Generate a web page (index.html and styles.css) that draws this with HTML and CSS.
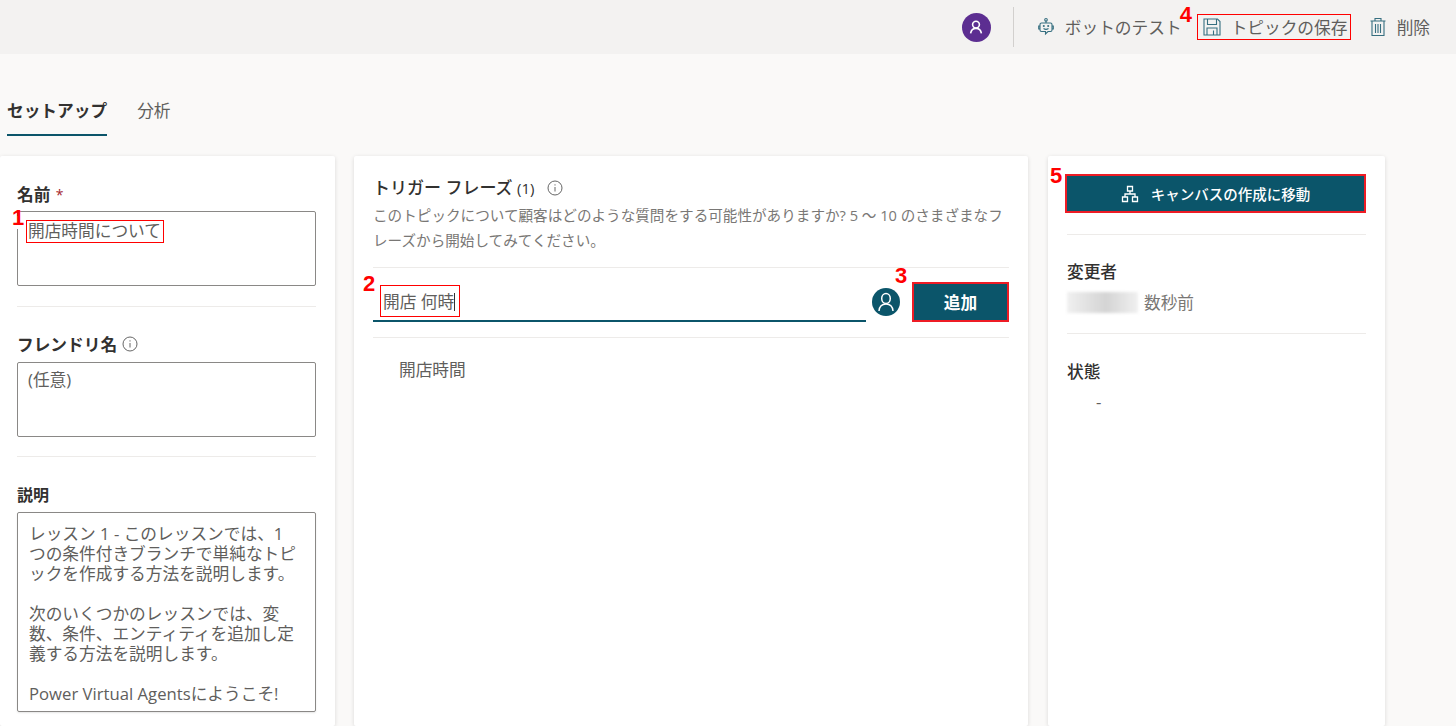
FILE: index.html
```html
<!DOCTYPE html>
<html lang="ja">
<head>
<meta charset="utf-8">
<title>トピック</title>
<link rel="stylesheet" href="styles.css">
</head>
<body>
<header class="topbar">
  <div class="avatar"><svg width="16" height="16" viewBox="0 0 16 16" fill="none" stroke="#fff" stroke-width="1.6"><circle cx="8" cy="5.6" r="3.4"/><path d="M2.6 14.4c.5-3.2 2.400-5 5.400-5s4.900 1.800 5.400 5"/></svg></div>
  <div class="vsep"></div>
  <button class="cmd cmd-test"><svg class="ico" width="20" height="20" viewBox="0 0 20 20" fill="none" stroke="#366f80" stroke-width="1.100"><circle cx="10" cy="2.800" r="1.300"/><path d="M10 4.100V6M5.500 6h9a1.500 1.500 0 0 1 1.500 1.500V13a1.500 1.500 0 0 1-1.500 1.500h-2.500L9.500 17v-2.500h-4A1.500 1.500 0 0 1 4 13V7.500A1.500 1.500 0 0 1 5.500 6zM4 9H2.700v3H4M16 9h1.300v3H16M7.500 11.500c1.500 1 3.500 1 5 0"/><circle cx="7.800" cy="9" r=".5"/><circle cx="12.200" cy="9" r=".5"/></svg>ボットのテスト</button>
  <button class="cmd cmd-save"><svg class="ico" width="18" height="18" viewBox="0 0 18 18" fill="none" stroke="#366f80" stroke-width="1.100"><path d="M1 1h13.500L17 3.500V17H1zM4.500 1v5.500h9V1M4 17v-7h10v7M10.500 12.500V17"/></svg><span>トピックの保存</span><b class="num num-4">4</b></button>
  <button class="cmd cmd-del"><svg class="ico" width="18" height="20" viewBox="0 0 18 20" fill="none" stroke="#366f80" stroke-width="1.100"><path d="M1.500 4h15M6 4V1.500h6V4M3 4v14.500h12V4M6.500 7v9M9 7v9M11.500 7v9"/></svg>削除</button>
</header>

<nav class="tabs">
  <a class="tab tab-on">セットアップ</a>
  <a class="tab">分析</a>
</nav>

<main class="cols">
  <section class="card card-left">
    <div class="field">
      <label class="lbl">名前 <em class="req">*</em></label>
      <div class="box box-name"><span class="mark mark-name">開店時間について</span><b class="num num-1">1</b></div>
    </div>
    <hr class="rule">
    <div class="field field-friendly">
      <label class="lbl">フレンドリ名<svg class="info" width="16" height="16" viewBox="0 0 16 16" fill="none" stroke="#555" stroke-width=".9"><circle cx="8" cy="8" r="7"/><path d="M8 7v4.500M8 4.300v1.200"/></svg></label>
      <div class="box box-friendly">(任意)</div>
    </div>
    <hr class="rule">
    <div class="field field-desc">
      <label class="lbl lbl-desc">説明</label>
      <div class="box box-desc">レッスン 1 - このレッスンでは、1<br>つの条件付きブランチで単純なトピ<br>ックを作成する方法を説明します。<br><br>次のいくつかのレッスンでは、変<br>数、条件、エンティティを追加し定<br>義する方法を説明します。<br><br>Power Virtual Agentsにようこそ!</div>
    </div>
  </section>

  <section class="card card-mid">
    <h2 class="mid-title">トリガー フレーズ <span class="count">(1)</span><svg class="info info-mid" width="16" height="16" viewBox="0 0 16 16" fill="none" stroke="#555" stroke-width=".9"><circle cx="8" cy="8" r="7"/><path d="M8 7v4.500M8 4.300v1.200"/></svg></h2>
    <p class="mid-desc">このトピックについて顧客はどのような質問をする可能性がありますか? 5 ～ 10 のさまざまなフレーズから開始してみてください。</p>
    <hr class="rule rule-a">
    <div class="addrow">
      <div class="phrase"><span class="mark mark-phrase">開店 何時<i class="caret"></i></span><b class="num num-2">2</b></div>
      <div class="user"><svg width="20" height="22" viewBox="0 0 20 22" fill="none" stroke="#fff" stroke-width="1.500"><ellipse cx="10" cy="7.500" rx="4.300" ry="5"/><path d="M3 20c.4-4.300 3-7 7-7s6.600 2.700 7 7"/></svg></div>
      <button class="addbtn">追加<b class="num num-3">3</b></button>
    </div>
    <hr class="rule">
    <div class="phrase-item">開店時間</div>
  </section>

  <section class="card card-right">
    <button class="gobtn"><svg width="18" height="18" viewBox="0 0 18 18" fill="none" stroke="#fff" stroke-width="1.300"><path d="M6.500 1.500h5v4.500h-5zM1.500 12h5v4.500h-5zM11.500 12h5v4.500h-5zM9 6v3M4 12V9h10v3"/></svg><span>キャンバスの作成に移動</span><b class="num num-5">5</b></button>
    <hr class="rule rule-r1">
    <h3 class="meta-h">変更者</h3>
    <div class="meta-row"><div class="blur"></div><span>数秒前</span></div>
    <hr class="rule rule-r2">
    <h3 class="meta-h">状態</h3>
    <div class="dash">-</div>
  </section>
</main>
</body>
</html>
```

FILE: styles.css
```css
* { box-sizing: border-box; }
body {
  margin: 0;
  height: 726px;
  overflow: hidden;
  background: #faf9f8;
  color: #323130;
  font-family: "Open Sans", "Noto Sans CJK JP", sans-serif;
  font-size: 16.7px;
}
button { font-family: inherit; border: 0; background: none; padding: 0; }

.topbar {
  height: 54px;
  background: #f3f2f1;
  display: flex;
  align-items: center;
  justify-content: flex-end;
  padding-right: 26px;
}
.avatar {
  width: 29px; height: 29px;
  border-radius: 50%;
  background: #5c2e91;
  display: flex; align-items: center; justify-content: center;
  margin-right: 22px;
}
.vsep { width: 1px; height: 40px; background: #d2d0ce; margin-right: 22px; }
.cmd {
  display: flex; align-items: center;
  height: 26px;
  font-size: 16.7px;
  color: #605e5c;
  position: relative;
  white-space: nowrap;
}
.ico { flex: none; }
.cmd-test { margin-right: 15px; }
.cmd-test .ico { margin-right: 9px; }
.cmd-save { width: 154px; padding-left: 5px; border: 1px solid #f00; margin-right: 18px; }
.cmd-save .ico { margin-right: 10px; }
.cmd-del .ico { margin-right: 10px; }

.num {
  position: absolute;
  color: #f00;
  font-family: "Liberation Sans", sans-serif;
  font-weight: 700;
  font-size: 22px;
  line-height: 22px;
}
.num-4 { left: -18px; top: -11px; }
.num-1 {
  left: -7px; top: -5px; padding: 0 1px;
  background: linear-gradient(transparent 9px, #fff 9px);
}
.num-2 { left: -10px; top: -9px; }
.num-3 { left: -19px; top: -19px; }
.num-5 { left: -17px; top: -11px; }

.tabs {
  display: flex;
  height: 48px;
  margin-top: 34px;
  padding-left: 7px;
}
.tab {
  height: 48px;
  line-height: 46px;
  color: #605e5c;
  margin-right: 30px;
}
.tab-on { font-weight: 700; color: #323130; border-bottom: 2px solid #0b556a; }

.cols {
  display: flex;
  align-items: flex-start;
  margin-top: 20px;
}
.card {
  background: #fff;
  border-radius: 2px;
  box-shadow: 0 1px 4px rgba(0,0,0,.13);
  height: 570px;
  flex: none;
}
.card-left { width: 335px; padding: 27px 19px 0 17px; margin-right: 19px; }
.card-mid { width: 674px; padding: 19px 19px 0 19px; margin-right: 20px; }
.card-right { width: 337px; padding: 18px 19px 0 19px; }

.rule { border: 0; height: 1px; background: #edebe9; margin: 0; }
.card-left .rule { width: 299px; }
.lbl {
  display: flex; align-items: center;
  height: 22px;
  font-weight: 700;
  white-space: pre;
}
.req { color: #a4262c; font-style: normal; font-weight: 400; font-size: 14px; margin-left: 1px; }
.info { margin-left: 5px; }
.box {
  margin-top: 6px;
  width: 299px;
  height: 75px;
  border: 1px solid #8a8886;
  border-radius: 2px;
  padding: 5px 10px;
  color: #605e5c;
  line-height: 24px;
  position: relative;
}
.box-name { margin-bottom: 20px; padding-top: 7px; }
.mark { display: inline-block; border: 1px solid #f00; white-space: nowrap; }
.mark-name { height: 23px; line-height: 19px; margin-left: -2px; padding: 0 2px 0 1px; }
.field-friendly { padding-top: 26px; }
.box-friendly { margin-bottom: 19px; margin-top: 7px; }
.field-desc { padding-top: 26px; }
.lbl-desc { font-size: 16px; }
.box-desc {
  height: 200px;
  margin-top: 7px;
  padding: 11px 11px 0;
  line-height: 20px;
  white-space: nowrap;
  overflow: hidden;
  box-shadow: 0 1px 2px rgba(0,0,0,.1);
}

.mid-title { margin: 0; height: 26px; line-height: 26px; font-size: 17px; font-weight: 500; display: flex; align-items: center; white-space: pre; }
.count { font-weight: 400; font-size: 15px; }
.info-mid { margin-left: 13px; }
.mid-desc { margin: 2px 0 0; width: 636px; font-size: 14.6px; line-height: 25px; color: #797775; }
.rule-a { margin-top: 14px; }
.addrow { display: flex; align-items: flex-start; height: 69px; padding-top: 14px; }
.phrase {
  width: 493px; height: 40px;
  border-bottom: 2px solid #0b556a;
  position: relative;
  padding: 3px 0 0 7px;
  margin-right: 6px;
  color: #605e5c;
}
.mark-phrase {
  width: 80px;
  height: 32px;
  line-height: 32px;
  padding: 0 0 0 2px;
  position: relative;
}
.caret { display: inline-block; width: 1px; height: 18px; background: #333; vertical-align: -3px; }
.user {
  width: 28px; height: 28px;
  margin-top: 6px; margin-right: 12px;
  border-radius: 50%;
  background: #0b556a;
  display: flex; align-items: center; justify-content: center;
  overflow: hidden;
}
.addbtn {
  width: 97px; height: 40px;
  background: #0b556a;
  border: 2px solid #ee1c25;
  color: #fff;
  font-size: 16.7px;
  font-weight: 700;
  position: relative;
}
.phrase-item { margin-top: 20px; padding-left: 26px; line-height: 24px; color: #605e5c; }

.gobtn {
  width: 301px; height: 39px;
  margin-left: -2px;
  background: #0b556a;
  border: 2px solid #ee1c25;
  color: #fff;
  font-size: 14.5px;
  font-weight: 500;
  display: flex; align-items: center; justify-content: center;
  gap: 12px;
  position: relative;
  white-space: nowrap;
}
.rule-r1 { margin-top: 21px; }
.meta-h { margin: 27px 0 0; font-size: 16.7px; font-weight: 500; line-height: 20px; }
.meta-row { display: flex; align-items: center; margin-top: 9px; height: 22px; color: #797775; }
.blur {
  width: 71px; height: 21px; margin-right: 6px;
  background: linear-gradient(90deg, #f0f0f0, #d4d4d4 55%, #f0f0f0);
  filter: blur(1.5px);
}
.rule-r2 { margin-top: 20px; }
.rule-r2 + .meta-h { margin-top: 28px; }
.dash { margin-top: 10px; padding-left: 29px; line-height: 20px; color: #605e5c; }
```
